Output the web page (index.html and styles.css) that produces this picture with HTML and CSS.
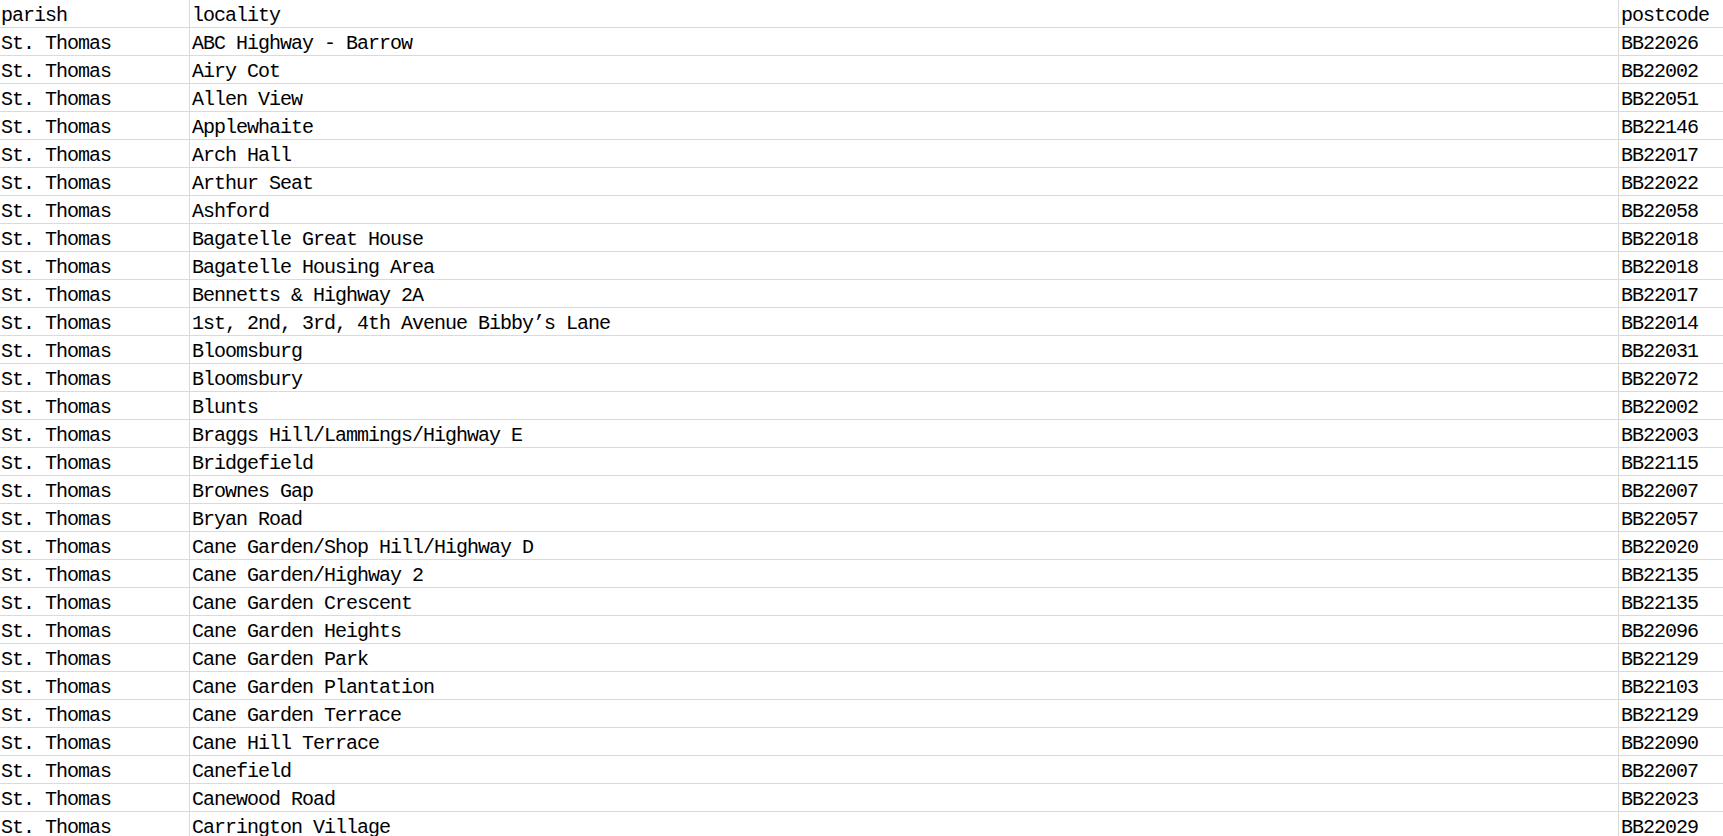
FILE: index.html
```html
<!DOCTYPE html>
<html>
<head>
<meta charset="utf-8">
<link rel="stylesheet" href="styles.css">
</head>
<body>
<div class="sheet">
  <div class="row"><div class="cell">parish</div><div class="cell">locality</div><div class="cell">postcode</div></div>
  <div class="row"><div class="cell">St. Thomas</div><div class="cell">ABC Highway - Barrow</div><div class="cell">BB22026</div></div>
  <div class="row"><div class="cell">St. Thomas</div><div class="cell">Airy Cot</div><div class="cell">BB22002</div></div>
  <div class="row"><div class="cell">St. Thomas</div><div class="cell">Allen View</div><div class="cell">BB22051</div></div>
  <div class="row"><div class="cell">St. Thomas</div><div class="cell">Applewhaite</div><div class="cell">BB22146</div></div>
  <div class="row"><div class="cell">St. Thomas</div><div class="cell">Arch Hall</div><div class="cell">BB22017</div></div>
  <div class="row"><div class="cell">St. Thomas</div><div class="cell">Arthur Seat</div><div class="cell">BB22022</div></div>
  <div class="row"><div class="cell">St. Thomas</div><div class="cell">Ashford</div><div class="cell">BB22058</div></div>
  <div class="row"><div class="cell">St. Thomas</div><div class="cell">Bagatelle Great House</div><div class="cell">BB22018</div></div>
  <div class="row"><div class="cell">St. Thomas</div><div class="cell">Bagatelle Housing Area</div><div class="cell">BB22018</div></div>
  <div class="row"><div class="cell">St. Thomas</div><div class="cell">Bennetts &amp; Highway 2A</div><div class="cell">BB22017</div></div>
  <div class="row"><div class="cell">St. Thomas</div><div class="cell">1st, 2nd, 3rd, 4th Avenue Bibby’s Lane</div><div class="cell">BB22014</div></div>
  <div class="row"><div class="cell">St. Thomas</div><div class="cell">Bloomsburg</div><div class="cell">BB22031</div></div>
  <div class="row"><div class="cell">St. Thomas</div><div class="cell">Bloomsbury</div><div class="cell">BB22072</div></div>
  <div class="row"><div class="cell">St. Thomas</div><div class="cell">Blunts</div><div class="cell">BB22002</div></div>
  <div class="row"><div class="cell">St. Thomas</div><div class="cell">Braggs Hill/Lammings/Highway E</div><div class="cell">BB22003</div></div>
  <div class="row"><div class="cell">St. Thomas</div><div class="cell">Bridgefield</div><div class="cell">BB22115</div></div>
  <div class="row"><div class="cell">St. Thomas</div><div class="cell">Brownes Gap</div><div class="cell">BB22007</div></div>
  <div class="row"><div class="cell">St. Thomas</div><div class="cell">Bryan Road</div><div class="cell">BB22057</div></div>
  <div class="row"><div class="cell">St. Thomas</div><div class="cell">Cane Garden/Shop Hill/Highway D</div><div class="cell">BB22020</div></div>
  <div class="row"><div class="cell">St. Thomas</div><div class="cell">Cane Garden/Highway 2</div><div class="cell">BB22135</div></div>
  <div class="row"><div class="cell">St. Thomas</div><div class="cell">Cane Garden Crescent</div><div class="cell">BB22135</div></div>
  <div class="row"><div class="cell">St. Thomas</div><div class="cell">Cane Garden Heights</div><div class="cell">BB22096</div></div>
  <div class="row"><div class="cell">St. Thomas</div><div class="cell">Cane Garden Park</div><div class="cell">BB22129</div></div>
  <div class="row"><div class="cell">St. Thomas</div><div class="cell">Cane Garden Plantation</div><div class="cell">BB22103</div></div>
  <div class="row"><div class="cell">St. Thomas</div><div class="cell">Cane Garden Terrace</div><div class="cell">BB22129</div></div>
  <div class="row"><div class="cell">St. Thomas</div><div class="cell">Cane Hill Terrace</div><div class="cell">BB22090</div></div>
  <div class="row"><div class="cell">St. Thomas</div><div class="cell">Canefield</div><div class="cell">BB22007</div></div>
  <div class="row"><div class="cell">St. Thomas</div><div class="cell">Canewood Road</div><div class="cell">BB22023</div></div>
  <div class="row"><div class="cell">St. Thomas</div><div class="cell">Carrington Village</div><div class="cell">BB22029</div></div>
</div>
</body>
</html>
```
FILE: styles.css
```css
html, body {
  margin: 0;
  padding: 0;
  background: #ffffff;
  overflow: hidden;
}
.sheet {
  display: flex;
  flex-direction: column;
  width: 100%;
  height: 836px;
  overflow: hidden;
  font-family: "Liberation Mono", "Noto Sans CJK SC", monospace;
  font-size: 20px;
  letter-spacing: -1px;
  color: #000000;
}
.row {
  display: grid;
  grid-template-columns: 190px 1429px 1fr;
  height: 28px;
  flex: none;
}
.cell {
  box-sizing: border-box;
  height: 28px;
  border-right: 1px solid #dadada;
  border-bottom: 1px solid #dadada;
  padding: 3px 0 0 2px;
  line-height: 25px;
  white-space: nowrap;
  overflow: hidden;
}
.cell:first-child {
  padding-left: 1px;
}
.cell:last-child {
  border-right: none;
}
```
